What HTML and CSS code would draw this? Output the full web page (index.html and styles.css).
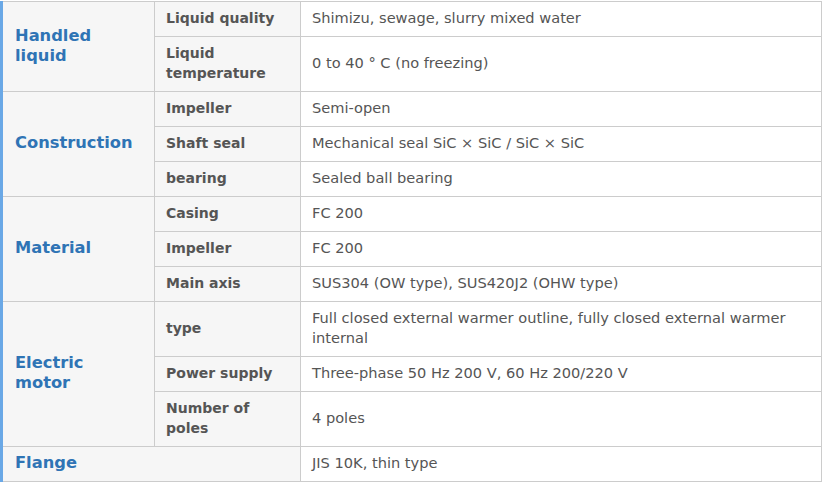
FILE: index.html
```html
<!DOCTYPE html>
<html>
<head>
<meta charset="utf-8">
<link rel="stylesheet" href="styles.css">
</head>
<body>
<table class="spec">
  <tr>
    <th class="cat" rowspan="2">Handled<br>liquid</th>
    <th class="sub">Liquid quality</th>
    <td>Shimizu, sewage, slurry mixed water</td>
  </tr>
  <tr>
    <th class="sub">Liquid<br>temperature</th>
    <td>0 to 40 ° C (no freezing)</td>
  </tr>
  <tr>
    <th class="cat" rowspan="3">Construction</th>
    <th class="sub">Impeller</th>
    <td>Semi-open</td>
  </tr>
  <tr>
    <th class="sub">Shaft seal</th>
    <td>Mechanical seal SiC × SiC / SiC × SiC</td>
  </tr>
  <tr>
    <th class="sub">bearing</th>
    <td>Sealed ball bearing</td>
  </tr>
  <tr>
    <th class="cat" rowspan="3">Material</th>
    <th class="sub">Casing</th>
    <td>FC 200</td>
  </tr>
  <tr>
    <th class="sub">Impeller</th>
    <td>FC 200</td>
  </tr>
  <tr>
    <th class="sub">Main axis</th>
    <td>SUS304 (OW type), SUS420J2 (OHW type)</td>
  </tr>
  <tr>
    <th class="cat" rowspan="3">Electric<br>motor</th>
    <th class="sub">type</th>
    <td>Full closed external warmer outline, fully closed external warmer internal</td>
  </tr>
  <tr>
    <th class="sub">Power supply</th>
    <td>Three-phase 50 Hz 200 V, 60 Hz 200/220 V</td>
  </tr>
  <tr>
    <th class="sub">Number of<br>poles</th>
    <td>4 poles</td>
  </tr>
  <tr>
    <th class="cat" colspan="2">Flange</th>
    <td>JIS 10K, thin type</td>
  </tr>
</table>
</body>
</html>
```
FILE: styles.css
```css
html, body {
  margin: 0;
  padding: 0;
  background: #fff;
}
body {
  padding: 0;
  font-family: "DejaVu Sans", Verdana, sans-serif;
}
.spec {
  border-collapse: collapse;
  width: 822px;
  margin-top: 1px;
  border-left: 3px solid #6aa8e6;
}
.spec th, .spec td {
  border: 1px solid #cccccc;
  text-align: left;
  vertical-align: middle;
  line-height: 20px;
  padding: 6px 11px 8px 11px;
}
.spec th.cat {
  width: 128px;
  padding-left: 12px;
  background: #f6f6f6;
  color: #2f74b5;
  font-size: 16.3px;
  font-weight: bold;
  line-height: 20px;
  border-left: 3px solid #6aa8e6;
}
.spec th.sub {
  width: 123px;
  background: #f6f6f6;
  color: #555;
  font-size: 14px;
  font-weight: bold;
}
.spec td {
  color: #555;
  font-size: 14.6px;
  font-weight: normal;
}
```
